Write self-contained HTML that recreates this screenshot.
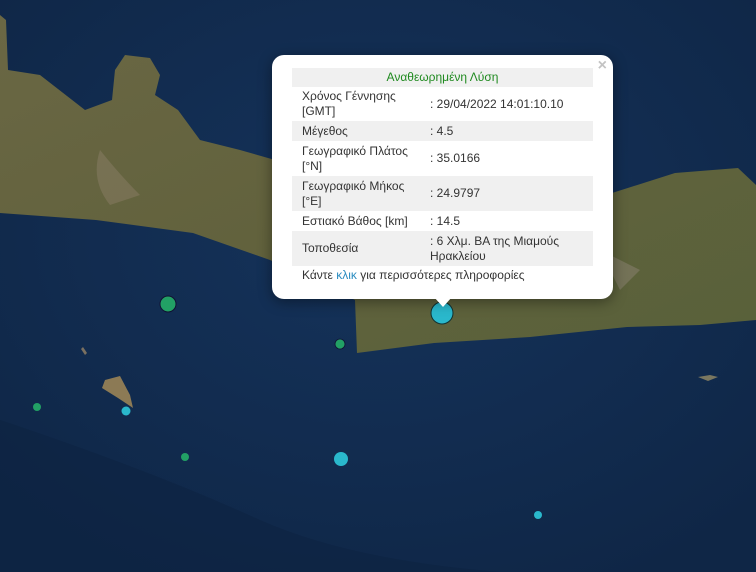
<!DOCTYPE html>
<html><head><meta charset="utf-8"><style>
html,body{margin:0;padding:0;width:756px;height:572px;overflow:hidden;background:#112a4d;font-family:"Liberation Sans",Arial,sans-serif}
#map{position:absolute;left:0;top:0;width:756px;height:572px}
.popup{position:absolute;left:272px;top:55px;width:341px;height:244px;background:#fff;border-radius:12px;box-shadow:0 3px 14px rgba(0,0,0,.4)}
.tip{position:absolute;left:434px;top:297px;width:0;height:0;border-left:9px solid transparent;border-right:9px solid transparent;border-top:10px solid #fff}
.close{position:absolute;right:6px;top:2px;color:#c3c3c3;font-size:16px;font-weight:bold}
table{position:absolute;left:20px;top:13px;width:301px;border-collapse:collapse;font-size:12px;color:#333}
td{padding:0 0 0 10px;line-height:15px;vertical-align:middle}
tr.g{background:#f0f0f0}
td.v{padding-left:0;width:163px}
.foot{position:absolute;left:30px;top:213px;font-size:12px;color:#333}
.foot span{color:#2a8cc0}
</style></head><body>
<svg id="map" width="756" height="572" viewBox="0 0 756 572">
<defs>
<radialGradient id="sea" cx="50%" cy="40%" r="70%"><stop offset="0" stop-color="#15335b"/><stop offset="1" stop-color="#0f2646"/></radialGradient>
<linearGradient id="land" x1="0" y1="0" x2="1" y2="1"><stop offset="0" stop-color="#6a6744"/><stop offset=".5" stop-color="#62623d"/><stop offset="1" stop-color="#58613a"/></linearGradient>
</defs>
<rect width="756" height="572" fill="url(#sea)"/>
<path d="M0 420 Q150 470 260 520 Q350 560 500 572 L0 572Z" fill="#0c2140" opacity=".5"/>
<path d="M0 15 L6 20 L8 70 L40 75 L85 110 L112 100 L115 70 L125 55 L150 58 L160 75 L155 95 L178 110 L200 140 L240 150 L275 160 L360 170 L420 175 L560 170 L612 193 L675 173 L738 168 L756 185 L756 320 L700 325 L627 327 L530 337 L434 343 L357 353 L355 300 L270 260 L193 233 L96 220 L0 213Z" fill="url(#land)"/>
<path d="M100 150 Q120 175 140 195 L110 205 Q90 180 100 150Z" fill="#8a7e66" opacity=".5"/>
<path d="M600 250 L640 270 L620 290 Z" fill="#8c8374" opacity=".5"/>
<path d="M105 380 L120 376 L130 395 L133 408 L118 398 L102 388Z" fill="#8c7a55"/>
<path d="M83 347 l4 6 l-2 2 l-4 -6z" fill="#7a7060"/>
<path d="M698 377 l12 -2 l8 2 l-10 4z" fill="#7a7760"/>
<circle cx="168" cy="304" r="8" fill="#22a065" stroke="#113" stroke-width="1"/>
<circle cx="340" cy="344" r="5" fill="#22a065" stroke="#113" stroke-width=".8"/>
<circle cx="37" cy="407" r="4" fill="#22a065"/>
<circle cx="185" cy="457" r="4" fill="#22a065"/>
<circle cx="442" cy="313" r="11" fill="#2ab8cc" stroke="#133" stroke-width="1"/>
<circle cx="126" cy="411" r="4.5" fill="#2ab8cc"/>
<circle cx="341" cy="459" r="7" fill="#2ab8cc"/>
<circle cx="538" cy="515" r="4" fill="#2ab8cc"/>
</svg>
<div class="popup">
<div class="close">×</div>
<table>
<tr class="g"><td colspan="2" style="text-align:center;color:#1f8a1f;height:19px;padding:0">Αναθεωρημένη Λύση</td></tr>
<tr style="height:34px"><td>Χρόνος Γέννησης<br>[GMT]</td><td class="v">: 29/04/2022 14:01:10.10</td></tr>
<tr class="g" style="height:20px"><td>Μέγεθος</td><td class="v">: 4.5</td></tr>
<tr style="height:35px"><td>Γεωγραφικό Πλάτος<br>[°N]</td><td class="v">: 35.0166</td></tr>
<tr class="g" style="height:35px"><td>Γεωγραφικό Μήκος<br>[°E]</td><td class="v">: 24.9797</td></tr>
<tr style="height:20px"><td>Εστιακό Βάθος [km]</td><td class="v">: 14.5</td></tr>
<tr class="g" style="height:35px"><td>Τοποθεσία</td><td class="v">: 6 Χλμ. ΒΑ της Μιαμούς<br>Ηρακλείου</td></tr>
</table>
<div class="foot">Κάντε <span>κλικ</span> για περισσότερες πληροφορίες</div>
</div>
<div class="tip"></div>
</body></html>
